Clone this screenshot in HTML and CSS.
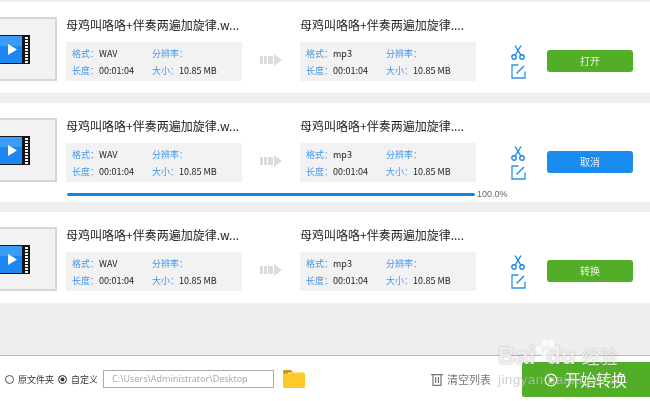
FILE: index.html
```html
<!DOCTYPE html>
<html lang="zh">
<head>
<meta charset="utf-8">
<title>转换列表</title>
<link rel="stylesheet" href="styles.css">
</head>
<body>
<svg class="defs" width="0" height="0" aria-hidden="true">
  <symbol id="film" viewBox="0 0 30 29">
    <rect width="30" height="29" fill="#151515"/>
    <rect x="0" y="1" width="22" height="27" fill="#1c86f2"/>
    <rect x="0" y="1" width="22" height="10" fill="#3b9bf8"/>
    <path d="M8 9 L17 14.5 L8 20 Z" fill="#fff"/>
    <g fill="#f4f4f4">
      <rect x="25" y="2" width="3" height="2"/><rect x="25" y="5" width="3" height="2"/>
      <rect x="25" y="8" width="3" height="2"/><rect x="25" y="11" width="3" height="2"/>
      <rect x="25" y="14" width="3" height="2"/><rect x="25" y="17" width="3" height="2"/>
      <rect x="25" y="20" width="3" height="2"/><rect x="25" y="23" width="3" height="2"/>
      <rect x="25" y="26" width="3" height="2"/>
    </g>
  </symbol>
  <symbol id="arrow" viewBox="0 0 22 12">
    <g fill="#dcdcdc">
      <rect x="0" y="2" width="3" height="8"/><rect x="4" y="2" width="3" height="8"/>
      <rect x="8" y="2" width="5" height="8"/>
      <path d="M14 0 L22 6 L14 12 Z"/>
    </g>
  </symbol>
  <symbol id="scissors" viewBox="0 0 14 15">
    <g fill="none" stroke="#1b87e8" stroke-width="1.4">
      <circle cx="3" cy="12" r="2.2"/><circle cx="11" cy="12" r="2.2"/>
      <path d="M4.2 10 L10 0.5 M9.8 10 L4 0.5"/>
    </g>
  </symbol>
  <symbol id="edit" viewBox="0 0 15 15">
    <g fill="none" stroke="#2b91ee" stroke-width="1.3">
      <path d="M7.5 1 H1 V14 H14 V7.5"/>
      <path d="M5.5 9.5 L13 2" stroke-width="1.6"/>
    </g>
  </symbol>
</svg>

<main class="list">
  <section class="row">
    <div class="thumb"><svg class="film"><use href="#film"/></svg></div>
    <div class="file">
      <h2 class="name">母鸡叫咯咯+伴奏两遍加旋律.w...</h2>
      <div class="info">
        <span><b>格式：</b>WAV</span><span><b>分辨率：</b></span>
        <span><b>长度：</b>00:01:04</span><span><b>大小：</b>10.85 MB</span>
      </div>
    </div>
    <svg class="arrow"><use href="#arrow"/></svg>
    <div class="file">
      <h2 class="name">母鸡叫咯咯+伴奏两遍加旋律....</h2>
      <div class="info">
        <span><b>格式：</b>mp3</span><span><b>分辨率：</b></span>
        <span><b>长度：</b>00:01:04</span><span><b>大小：</b>10.85 MB</span>
      </div>
    </div>
    <div class="tools"><svg class="scissors"><use href="#scissors"/></svg><svg class="edit"><use href="#edit"/></svg></div>
    <button class="action green">打开</button>
  </section>

  <section class="row busy">
    <div class="thumb"><svg class="film"><use href="#film"/></svg></div>
    <div class="file">
      <h2 class="name">母鸡叫咯咯+伴奏两遍加旋律.w...</h2>
      <div class="info">
        <span><b>格式：</b>WAV</span><span><b>分辨率：</b></span>
        <span><b>长度：</b>00:01:04</span><span><b>大小：</b>10.85 MB</span>
      </div>
    </div>
    <svg class="arrow"><use href="#arrow"/></svg>
    <div class="file">
      <h2 class="name">母鸡叫咯咯+伴奏两遍加旋律....</h2>
      <div class="info">
        <span><b>格式：</b>mp3</span><span><b>分辨率：</b></span>
        <span><b>长度：</b>00:01:04</span><span><b>大小：</b>10.85 MB</span>
      </div>
    </div>
    <div class="tools"><svg class="scissors"><use href="#scissors"/></svg><svg class="edit"><use href="#edit"/></svg></div>
    <button class="action blue">取消</button>
    <div class="progress"><div class="bar"></div><span class="pct">100.0%</span></div>
  </section>

  <section class="row">
    <div class="thumb"><svg class="film"><use href="#film"/></svg></div>
    <div class="file">
      <h2 class="name">母鸡叫咯咯+伴奏两遍加旋律.w...</h2>
      <div class="info">
        <span><b>格式：</b>WAV</span><span><b>分辨率：</b></span>
        <span><b>长度：</b>00:01:04</span><span><b>大小：</b>10.85 MB</span>
      </div>
    </div>
    <svg class="arrow"><use href="#arrow"/></svg>
    <div class="file">
      <h2 class="name">母鸡叫咯咯+伴奏两遍加旋律....</h2>
      <div class="info">
        <span><b>格式：</b>mp3</span><span><b>分辨率：</b></span>
        <span><b>长度：</b>00:01:04</span><span><b>大小：</b>10.85 MB</span>
      </div>
    </div>
    <div class="tools"><svg class="scissors"><use href="#scissors"/></svg><svg class="edit"><use href="#edit"/></svg></div>
    <button class="action green">转换</button>
  </section>
</main>

<footer class="foot">
  <label class="radio"><i class="dot"></i>原文件夹</label>
  <label class="radio"><i class="dot on"></i>自定义</label>
  <div class="path">C:\Users\Administrator\Desktop</div>
  <svg class="folder" viewBox="0 0 22 18"><path d="M0 1.5 Q0 0 1.5 0 H8 L10.5 2.5 H6 L4 4 H0 Z" fill="#c9970f"/><path d="M0 3.5 H7 L9 2.5 H20.5 Q22 2.5 22 4 V16.5 Q22 18 20.5 18 H1.5 Q0 18 0 16.5 Z" fill="#fdca2b"/></svg>
  <div class="clear">
    <svg class="trash" viewBox="0 0 12 13"><g fill="none" stroke="#777" stroke-width="1.2"><path d="M0 1.6 H12 M2 1.6 V12.4 H10 V1.6"/><path d="M4.6 4 V10 M7.4 4 V10"/></g></svg>
    清空列表
  </div>
  <button class="start">
    <svg class="play" viewBox="0 0 14 14"><circle cx="7" cy="7" r="5.8" fill="none" stroke="#fff" stroke-width="1.3"/><path d="M5.5 4 L10 7 L5.5 10 Z" fill="#fff"/></svg>
    开始转换
  </button>
</footer>

<div class="mark" aria-hidden="true">
  <div class="mark-top">Bai<svg class="paw" viewBox="0 0 24 24"><g fill="#fff"><ellipse cx="5" cy="10" rx="2.6" ry="3.4"/><ellipse cx="10" cy="4.5" rx="2.6" ry="3.4"/><ellipse cx="15.5" cy="4.5" rx="2.6" ry="3.4"/><ellipse cx="20" cy="10" rx="2.6" ry="3.4"/><path d="M12.5 10 C9 10 5 17 7 20 C9 22 11 20 12.5 20 C14 20 16 22 18 20 C20 17 16 10 12.5 10 Z"/></g></svg><span class="mark-du">du</span><span class="mark-cn">经验</span></div>
  <div class="mark-url">jingyan.baidu.com</div>
</div>
</body>
</html>
```

FILE: styles.css
```css
* { box-sizing: border-box; }
html, body { margin: 0; padding: 0; }
body {
  width: 650px;
  height: 401px;
  overflow: hidden;
  position: relative;
  background: #fff;
  font-family: "Noto Sans CJK SC", "Noto Sans", sans-serif;
  color: #333;
  filter: blur(.3px);
}
.defs { position: absolute; }
.list {
  height: 356px;
  padding-top: 2px;
  background: #eeeeee;
  border-bottom: 1px solid #b9b9b9;
  display: flex;
  flex-direction: column;
  gap: 10px;
}
.row {
  height: 91px;
  padding-top: 15px;
  background: #fff;
  display: flex;
  align-items: flex-start;
  position: relative;
}
.row.busy { height: 99px; }
.thumb {
  width: 57px;
  height: 64px;
  background: #f2f2f2;
  border: 2px solid #d6d6d6;
  border-left: 0;
  display: flex;
  align-items: center;
  flex: none;
}
.film { width: 30px; height: 29px; }
.file { width: 176px; margin-left: 9px; flex: none; }
.name {
  margin: 0;
  height: 25px;
  font-size: 12px;
  font-weight: 400;
  line-height: 16px;
  color: #222;
  white-space: nowrap;
}
.info {
  height: 39px;
  padding: 3px 0 0 6px;
  background: #f2f2f2;
  display: grid;
  grid-template-columns: 80px 1fr;
  grid-auto-rows: 17px;
  font-size: 9px;
  line-height: 17px;
  color: #222;
  white-space: nowrap;
}
.info b { font-weight: 400; color: #3f97ee; }
.arrow { width: 22px; height: 12px; margin: 37px 9px 0 18px; flex: none; }
.arrow + .file { margin-left: 9px; }
.tools {
  width: 15px;
  margin: 28px 0 0 35px;
  display: flex;
  flex-direction: column;
  gap: 4px;
  flex: none;
}
.scissors { width: 14px; height: 15px; }
.edit { width: 15px; height: 15px; }
.action {
  width: 86px;
  height: 22px;
  margin: 33px 0 0 21px;
  padding: 0;
  border: 0;
  border-radius: 3px;
  color: #e8f5e0;
  font: 400 10px/22px "Noto Sans CJK SC", sans-serif;
  flex: none;
}
.green { background: #52ae26; }
.blue { background: #1a8cf0; color: #e6f2fd; }
.progress {
  position: absolute;
  left: 67px;
  top: 85px;
  display: flex;
  align-items: center;
}
.bar { width: 408px; height: 3px; border-radius: 2px; background: #1186ea; }
.pct { margin-left: 2px; font-size: 9px; line-height: 12px; color: #666; font-family: "Liberation Sans", sans-serif; }
.foot {
  height: 45px;
  padding-left: 5px;
  display: flex;
  align-items: flex-start;
  position: relative;
  background: #fff;
}
.radio {
  display: flex;
  align-items: center;
  height: 18px;
  margin-top: 14px;
  margin-right: 4px;
  font-size: 9px;
  color: #333;
  white-space: nowrap;
}
.radio + .radio { margin-right: 5px; }
.dot {
  width: 9px;
  height: 9px;
  margin-right: 4px;
  border: 1px solid #555;
  border-radius: 50%;
  background: #fff;
}
.dot.on { background: #333; box-shadow: inset 0 0 0 1.5px #fff; }
.path {
  width: 171px;
  height: 18px;
  margin: 14px 0 0 0;
  padding-left: 8px;
  border: 1px solid #aaa;
  font: 9px/16px "Noto Sans", sans-serif;
  color: #aaa;
  white-space: nowrap;
}
.folder { width: 22px; height: 18px; margin: 14px 0 0 9px; flex: none; }
.clear {
  display: flex;
  align-items: center;
  gap: 4px;
  height: 18px;
  margin: 14px 0 0 126px;
  font-size: 11px;
  color: #777;
  white-space: nowrap;
}
.trash { width: 12px; height: 13px; }
.start {
  position: absolute;
  left: 522px;
  top: 6px;
  width: 128px;
  height: 35px;
  padding: 0 0 0 22px;
  border: 0;
  border-radius: 2px 0 0 2px;
  background: #52ae26;
  color: #fff;
  font: 400 15.5px/35px "Noto Sans CJK SC", sans-serif;
  display: flex;
  align-items: center;
  gap: 7px;
}
.play { width: 14px; height: 14px; }
.mark {
  position: absolute;
  left: 498px;
  top: 340px;
  color: rgba(255, 255, 255, .75);
  pointer-events: none;
}
.mark-top {
  display: flex;
  align-items: center;
  height: 32px;
  font: 700 24px/32px "Liberation Sans", sans-serif;
  text-shadow: 0 0 2px rgba(110, 110, 110, .55);
  white-space: nowrap;
}
.paw { width: 30px; height: 28px; margin: -8px -16px 0 -3px; opacity: .72; }
.mark-du { position: relative; }
.mark-cn { margin-left: 6px; font: 400 18px/32px "Noto Sans CJK SC", sans-serif; }
.mark-url {
  margin: 0;
  font: 400 13.5px/15px "Liberation Sans", sans-serif;
  letter-spacing: .4px;
  color: rgba(190, 190, 190, .75);
}
```
